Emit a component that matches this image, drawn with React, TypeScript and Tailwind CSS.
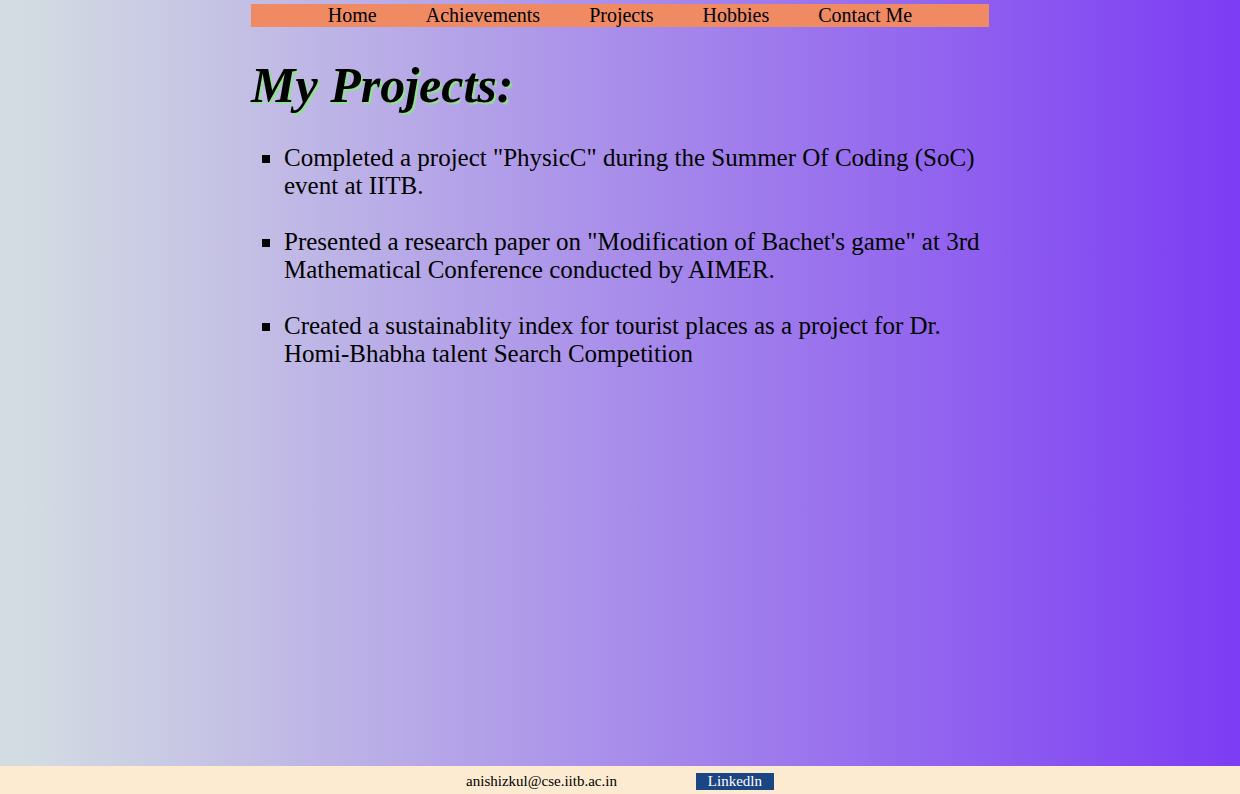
import React from "react";

const links = ["Home", "Achievements", "Projects", "Hobbies", "Contact Me"];

const projects = [
  'Completed a project "PhysicC" during the Summer Of Coding (SoC) event at IITB.',
  'Presented a research paper on "Modification of Bachet\'s game" at 3rd Mathematical Conference conducted by AIMER.',
  "Created a sustainablity index for tourist places as a project for Dr. Homi-Bhabha talent Search Competition",
];

const App = () => {
  return (
    <div className="min-h-screen flex flex-col bg-[linear-gradient(to_right,#d3dce2_2%,#7c3cf3_100%)] font-['Liberation_Serif',serif] text-black">
      <div className="flex-1">
        <div className="w-[738px] mx-auto">
          {/* nav bar */}
          <nav className="mt-[4px] h-[23px] pb-[2px] bg-[#ef8a62] flex justify-center items-center gap-[49px] text-[20px] leading-none">
            {links.map((l) => (
              <a key={l} href="#">
                {l}
              </a>
            ))}
          </nav>

          <h1 className="mt-[30px] text-[50px] leading-[56px] font-bold italic [text-shadow:2px_2px_1px_#8fe38f]">
            My Projects:
          </h1>

          <ul className="mt-[31px] pl-[33px] text-[25px] leading-[28px] list-[square] flex flex-col gap-[28px]">
            {projects.map((p) => (
              <li key={p} className="marker:text-[26px] marker:leading-[20px]">
                {p}
              </li>
            ))}
          </ul>
        </div>
      </div>

      {/* footer */}
      <footer className="h-[28px] bg-[#fdebd1] flex justify-center items-center gap-[79px] text-[15px]">
        <span className="pt-[3px]">anishizkul@cse.iitb.ac.in</span>
        <a href="#" className="mt-[3px] w-[78px] h-[17px] bg-[#1c4583] text-white text-center leading-[17px]">
          Linkedln
        </a>
      </footer>
    </div>
  );
};

export default App;
